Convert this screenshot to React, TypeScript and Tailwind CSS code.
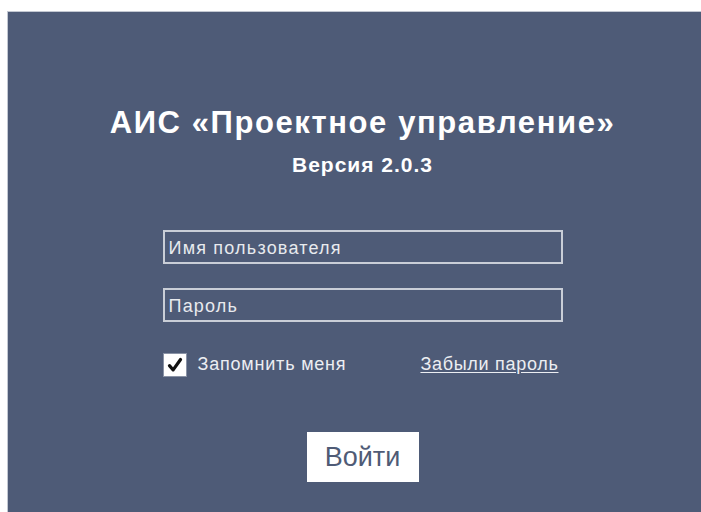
import { useState } from "react";

export default function App() {
    const [remember, setRemember] = useState(true);

    return (
        <div className="h-[512px] w-[701px] overflow-hidden bg-white pl-[7px] pt-[11px]" style={{ fontFamily: '"Liberation Sans", Arial, sans-serif' }}>
            <div className="h-[520px] w-[710px] border-l border-t border-[#c3c8d2] bg-[#4e5b77]">
                <div className="flex flex-col items-center pt-[94px] text-white">
                    <h1 className="text-[31px] font-bold leading-[34px] tracking-[1.6px]">АИС «Проектное управление»</h1>
                    <h4 className="mt-[13px] text-[21px] font-bold leading-[24px] tracking-[1px]">Версия 2.0.3</h4>

                    <form className="mt-[53px] flex w-[400px] flex-col" action="">
                        <input
                            className="h-[34px] w-full border-2 border-[#c9ced7] bg-transparent px-[4px] pt-[3px] text-[18px] tracking-[1.2px] text-[#e8eaee] placeholder:text-[#e8eaee] outline-none"
                            placeholder="Имя пользователя"
                        />
                        <input
                            className="mt-[24px] h-[34px] w-full border-2 border-[#c9ced7] bg-transparent px-[4px] pt-[3px] text-[18px] tracking-[1.2px] text-[#e8eaee] placeholder:text-[#e8eaee] outline-none"
                            type="password"
                            placeholder="Пароль"
                        />

                        <div className="mt-[29px] flex items-center justify-between">
                            <label className="flex items-center gap-[11px] text-[18px] tracking-[0.8px] text-[#eceef2]">
                                <button
                                    type="button"
                                    onClick={() => setRemember(!remember)}
                                    className="flex h-[24px] w-[24px] items-center justify-center border border-[#8a93a6] bg-white"
                                >
                                    {remember && (
                                        <svg width="16" height="16" viewBox="0 0 13 13">
                                            <path d="M2 7 L5 10.5 L11 2" fill="none" stroke="#111" strokeWidth="2.6" strokeLinecap="round" strokeLinejoin="round" />
                                        </svg>
                                    )}
                                </button>
                                Запомнить меня
                            </label>
                            <a href="#" className="pr-[4px] text-[18px] tracking-[0.7px] text-[#eceef2] underline underline-offset-2">Забыли пароль</a>
                        </div>

                        <button type="button" className="mx-auto mt-[54px] h-[50px] w-[112px] bg-white text-[27px] text-[#4f5b76]">
                            Войти
                        </button>
                    </form>
                </div>
            </div>
        </div>
    );
}
